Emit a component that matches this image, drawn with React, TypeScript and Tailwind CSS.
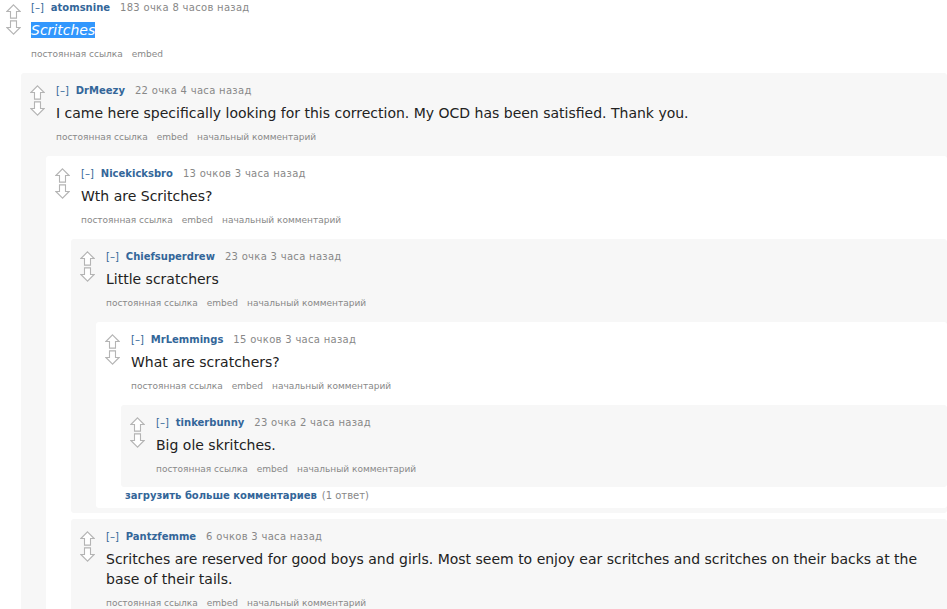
import React from "react";

type Node = {
  author: string;
  score: string;
  time: string;
  body: React.ReactNode;
  parentLink?: boolean;
  children?: Node[];
  more?: string;
};

const tree: Node = {
  author: "atomsnine",
  score: "183 очка",
  time: "8 часов назад",
  body: <span className="bg-[#3297fd] text-white italic">Scritches</span>,
  children: [
    {
      author: "DrMeezy",
      score: "22 очка",
      time: "4 часа назад",
      body: "I came here specifically looking for this correction. My OCD has been satisfied. Thank you.",
      parentLink: true,
      children: [
        {
          author: "Nicekicksbro",
          score: "13 очков",
          time: "3 часа назад",
          body: "Wth are Scritches?",
          parentLink: true,
          children: [
            {
              author: "Chiefsuperdrew",
              score: "23 очка",
              time: "3 часа назад",
              body: "Little scratchers",
              parentLink: true,
              children: [
                {
                  author: "MrLemmings",
                  score: "15 очков",
                  time: "3 часа назад",
                  body: "What are scratchers?",
                  parentLink: true,
                  more: "(1 ответ)",
                  children: [
                    {
                      author: "tinkerbunny",
                      score: "23 очка",
                      time: "2 часа назад",
                      body: "Big ole skritches.",
                      parentLink: true,
                    },
                  ],
                },
              ],
            },
            {
              author: "Pantzfemme",
              score: "6 очков",
              time: "3 часа назад",
              body: "Scritches are reserved for good boys and girls. Most seem to enjoy ear scritches and scritches on their backs at the base of their tails.",
              parentLink: true,
            },
          ],
        },
      ],
    },
  ],
};

// стрелки голосования
const Arrow = ({ down }: { down?: boolean }) => (
  <svg width="15" height="15" viewBox="0 0 15 15" className={down ? "rotate-180" : ""}>
    <path
      d="M7.5 0.9 L14.1 7.5 H10.5 V14.1 H4.5 V7.5 H0.9 Z"
      fill="#fff"
      stroke="#b4b4b4"
      strokeWidth="1.1"
    />
  </svg>
);

const Comment = ({ node, depth }: { node: Node; depth: number }) => {
  const top = depth === 0;
  const boxed = top
    ? "pl-[6px]"
    : depth % 2 === 1
      ? "bg-[#f7f7f7] rounded-[3px] pt-[10px] pb-[5px] pl-[9px]"
      : "bg-white rounded-[3px] pt-[10px] pb-[5px] pl-[9px]";

  return (
    <div className={boxed}>
      <div className="flex pb-[6px]">
        <div
          className={`${top ? "w-[25px] pt-[4px]" : "w-[26px] pt-[2px]"} shrink-0 flex flex-col gap-[1px]`}
        >
          <Arrow />
          <Arrow down />
        </div>
        <div className="min-w-0 flex-1 pr-[6px]">
          <div className="pt-[1px] h-[15px] leading-[14px] text-[10px] whitespace-nowrap flex">
            <span className="text-[#369]">[–]</span>
            <span className="ml-[7px] font-bold text-[#369]">{node.author}</span>
            <span className="ml-[10px] text-[#888] tracking-[0.3px]">
              {node.score} {node.time}
            </span>
          </div>
          <div className="pt-[5px] pb-[5px] text-[14px] leading-[20px] text-[#222]">{node.body}</div>
          <ul className="pt-[2px] h-[16px] leading-[14px] text-[9px] text-[#888] flex gap-[9px] whitespace-nowrap">
            <li>постоянная ссылка</li>
            <li>embed</li>
            {node.parentLink && <li>начальный комментарий</li>}
          </ul>
        </div>
      </div>
      {node.children && (
        <div className={top ? "ml-[15px]" : "ml-[16px]"}>
          {node.children.map((c) => (
            <div key={c.author} className="mt-[6px]">
              <Comment node={c} depth={depth + 1} />
            </div>
          ))}
          {node.more && (
            <div className="ml-[4px] mt-[2px] h-[14px] leading-[14px] text-[10px] whitespace-nowrap">
              <span className="font-bold text-[#369]">загрузить больше комментариев</span>
              <span className="ml-[5px] text-[#888]">{node.more}</span>
            </div>
          )}
        </div>
      )}
    </div>
  );
};

export default function App() {
  return (
    <div className="w-[947px] h-[609px] overflow-hidden bg-white font-['DejaVu_Sans',Verdana,sans-serif]">
      <Comment node={tree} depth={0} />
    </div>
  );
}
